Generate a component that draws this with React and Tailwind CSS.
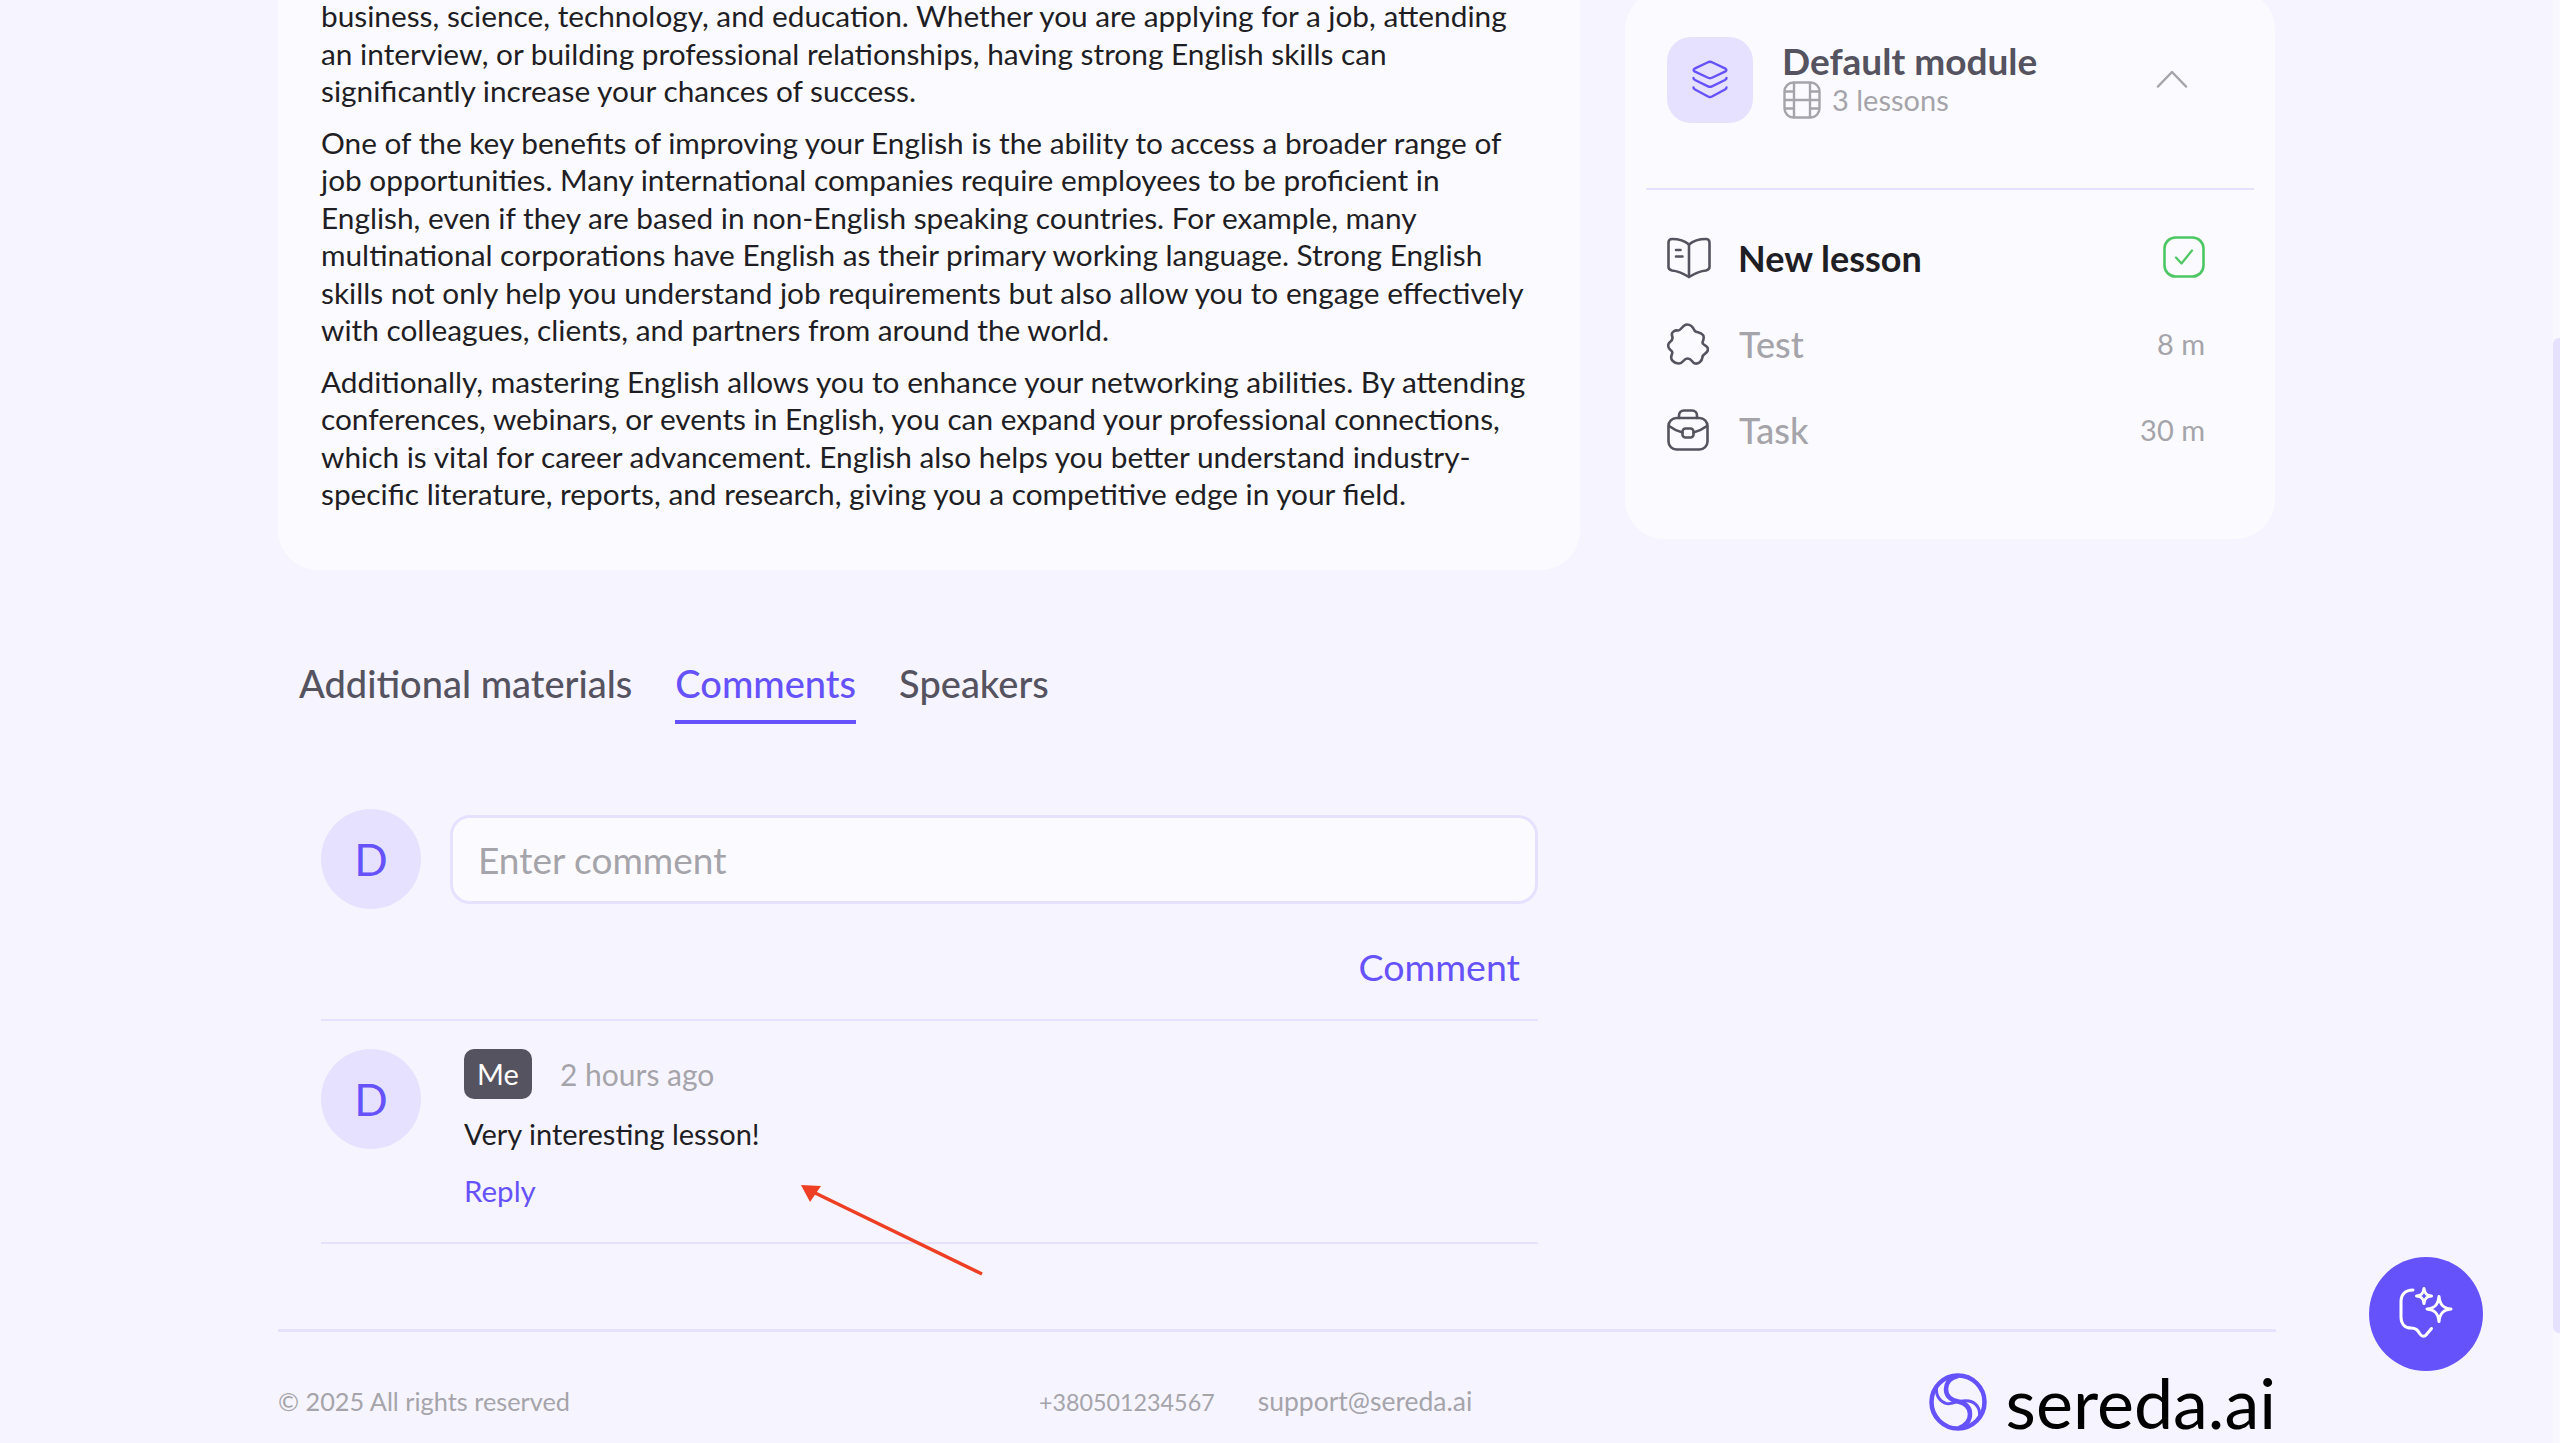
const paragraphs = [
  ['business, science, technology, and education. Whether you are applying for a job, attending', 'an interview, or building professional relationships, having strong English skills can', 'significantly increase your chances of success.'],
  ['One of the key benefits of improving your English is the ability to access a broader range of', 'job opportunities. Many international companies require employees to be proficient in', 'English, even if they are based in non-English speaking countries. For example, many', 'multinational corporations have English as their primary working language. Strong English', 'skills not only help you understand job requirements but also allow you to engage effectively', 'with colleagues, clients, and partners from around the world.'],
  ['Additionally, mastering English allows you to enhance your networking abilities. By attending', 'conferences, webinars, or events in English, you can expand your professional connections,', 'which is vital for career advancement. English also helps you better understand industry-', 'specific literature, reports, and research, giving you a competitive edge in your field.'],
]

function LayersIcon() {
  return (
    <svg width="40" height="40" viewBox="0 0 40 40" fill="none" stroke="#6652fa" strokeWidth="2.4" strokeLinecap="round" strokeLinejoin="round">
      <path d="M17.5 2.5c1.5-.8 3.5-.8 5 0l13 6.2c1.2.7 1.2 2 0 2.700l-13 6.100c-1.500.8-3.500.8-5 0l-13-6.100c-1.200-.7-1.200-2 0-2.700z" />
      <path d="M3.500 18c0 1 .5 1.500 1.500 2l13 6.300c1.300.6 2.700.6 4 0L35 20c1-.5 1.500-1 1.500-2" />
      <path d="M3.500 27.500c0 1 .5 1.500 1.500 2l13 7c1.300.6 2.700.6 4 0l13-7c1-.5 1.500-1 1.500-2" />
    </svg>
  )
}

function FilmIcon() {
  return (
    <svg width="38" height="38" viewBox="0 0 38 38" fill="none" stroke="#a5a4aa" strokeWidth="2.400" strokeLinecap="round" strokeLinejoin="round">
      <rect x="1.500" y="1.500" width="35" height="35" rx="9" />
      <path d="M11 2v34M27 2v34M2 19h34M2 10.500h9M2 27.500h9M27 10.500h9M27 27.500h9" />
    </svg>
  )
}

function BookIcon() {
  return (
    <svg width="44" height="42" viewBox="0 0 44 42" fill="none" stroke="#55535f" strokeWidth="2.600" strokeLinecap="round" strokeLinejoin="round">
      <path d="M22 7.500 C18 4 11 2 5 2 C3 2 1.500 3.500 1.500 5.500 V30 C1.500 32 3 33 5 33.500 C11 34 17 37 22 40 C27 37 33 34 39 33.500 C41 33 42.500 32 42.500 30 V5.500 C42.500 3.500 41 2 39 2 C33 2 26 4 22 7.500 Z" />
      <path d="M22 7.500V40M9 13h4.500M9 19.500h6.500" />
    </svg>
  )
}

function PuzzleIcon() {
  return (
    <svg width="42" height="42" viewBox="0 0 42 42" fill="none" stroke="#55535f" strokeWidth="2.600" strokeLinecap="round" strokeLinejoin="round">
      <path d="M20 1.500C24 1.500 26 4 27.500 7.500C29 10 33 8.500 36 12C38 15 35.500 18 35.500 20C35.500 22 41 22.500 41 26C41 31 36 30 35.500 34C35 39 31 41 28 40.500C25 40 25 35.500 20.500 35.500C16 35.500 16.500 41 11.500 40.500C7 40 3 37 4.500 32.500C5.500 29.500 6 29 3.500 27C.5 24.500 .5 21 3 19C6 17 6 15 5 12.500C4 9 8 7 11 7.500C14 8 15.500 1.500 20 1.500Z" />
    </svg>
  )
}

function BriefcaseIcon() {
  return (
    <svg width="42" height="42" viewBox="0 0 42 42" fill="none" stroke="#55535f" strokeWidth="2.600" strokeLinecap="round" strokeLinejoin="round">
      <rect x="1.500" y="9" width="39" height="31.500" rx="8" />
      <path d="M12 9V6.500C12 3.500 14 1.500 17 1.500h8c3 0 5 2 5 5V9" />
      <path d="M2 17c4 3 8 5 13.500 6.500M40 17c-4 3-8 5-13.500 6.500" />
      <rect x="15.500" y="19.500" width="11" height="9" rx="3" />
    </svg>
  )
}

function CheckBox() {
  return (
    <svg className="-mt-[2px]" width="42" height="42" viewBox="0 0 42 42" fill="none" stroke="#4dc764" strokeWidth="2.600" strokeLinecap="round" strokeLinejoin="round">
      <rect x="1.500" y="1.500" width="39" height="39" rx="11" />
      <path d="M13 21.500l5.500 6 10.500-13" strokeWidth="2.200" />
    </svg>
  )
}

function ChatSparkle() {
  return (
    <svg width="54" height="54" viewBox="0 0 54 54" fill="none" stroke="#ffffff" strokeWidth="3" strokeLinecap="round" strokeLinejoin="round">
      <path d="M14 3C6 3 2 8 2 14v16c0 7 4 11 10 11 5 0 6.500 2 9 6 2 3 4.500 3 6.500 .5l5-6" />
      <path d="M25 1.500c.6 5 2.500 7 7.500 7.500-5 .5-6.900 2.500-7.500 7.500-.6-5-2.500-7-7.500-7.500 5-.5 6.900-2.500 7.500-7.500z" />
      <path d="M40 9.500c.8 8 4 11.700 12 12.500-8 .8-11.200 4.500-12 12.500-.8-8-4-11.700-12-12.500 8-.8 11.200-4.500 12-12.500z" />
    </svg>
  )
}

function Logo() {
  return (
    <svg width="58" height="58" viewBox="0 0 58 58" fill="none" stroke="#6652fa" strokeWidth="4.500">
      <circle cx="29" cy="29" r="26.500" />
      <path d="M29 3 C20 5 17 11 17 16 C17 23 22 27 29 28.500 C36 30 41 34 41 41 C41 47 38 52 30 55" />
      <path d="M8 12 C6 20 9 27 16 30 C20 32 25 30 29 28.500" strokeWidth="3" />
      <path d="M50 46 C52 38 49 31 42 28.500 C38 27 33 28 29 28.500" strokeWidth="3" />
    </svg>
  )
}

function Avatar() {
  return (
    <div className="w-[100px] h-[100px] shrink-0 rounded-full bg-[#e5e1ff] flex items-center justify-center text-[44px] leading-none text-[#6652fa]">D</div>
  )
}

function ArrowMark() {
  return (
    <svg className="absolute left-[795px] top-[1180px]" width="195" height="100" viewBox="0 0 195 100" fill="none">
      <path d="M187 94 L14 10" stroke="#ee3f24" strokeWidth="3.500" />
      <path d="M6 5 L26 6 L15 22 Z" fill="#ee3f24" />
    </svg>
  )
}

export default function App() {
  return (
    <div className="relative h-[1443px] overflow-hidden bg-[#f6f5ff] font-['Lato',sans-serif] text-[#1f1e24]">
      <div className="flex gap-[45px] pl-[278px]">
        <div className="w-[1302px] shrink-0">
          <div className="-mt-[40px] h-[610px] rounded-[40px] bg-[#fbfbff] pl-[43px] pt-[37px] text-[29.800px] leading-[37.500px] flex flex-col gap-[14px]">
            {paragraphs.map((lines, i) => (
              <p key={i}>
                {lines.map((line) => (
                  <span key={line} className="block whitespace-nowrap">{line}</span>
                ))}
              </p>
            ))}
          </div>

          <div className="mt-[89px] flex gap-[43px] pl-[21px] text-[38px] leading-[48px] font-medium text-[#55535f]">
            <div className="h-[65px]">Additional materials</div>
            <div className="h-[65px] border-b-4 border-[#6652fa] text-[#6652fa]">Comments</div>
            <div className="h-[65px]">Speakers</div>
          </div>

          <div className="mt-[85px] pl-[43px] pr-[42px]">
            <div className="flex gap-[29px]">
              <Avatar />
              <div className="mt-[6px] h-[89px] flex-1 rounded-[20px] border-[3px] border-[#e5e1ff] bg-[#fbfbff] pl-[25px] flex items-center text-[37px] text-[#a5a4aa]">Enter comment</div>
            </div>
            <div className="mt-[36px] flex justify-end pr-[18px] text-[37.500px] leading-[44px] text-[#6652fa]">Comment</div>
            <div className="mt-[30px] h-[2px] bg-[#e5e1ff]" />

            <div className="flex gap-[43px] pt-[28px] h-[223px] border-b-2 border-[#e5e1ff]">
              <Avatar />
              <div>
                <div className="flex items-center gap-[28px]">
                  <span className="h-[50px] w-[68px] rounded-[10px] bg-[#55535f] text-white text-[29px] flex items-center justify-center">Me</span>
                  <span className="text-[30px] text-[#a5a4aa]">2 hours ago</span>
                </div>
                <div className="mt-[17px] text-[29px] leading-[36px]">Very interesting lesson!</div>
                <div className="mt-[21px] text-[29.500px] leading-[36px] text-[#6652fa]">Reply</div>
              </div>
            </div>
          </div>
        </div>

        <div className="-mt-[10px] w-[650px] h-[549px] shrink-0 rounded-[40px] bg-[#fbfbff] pt-[47px]">
          <div className="flex items-center pl-[42px] pr-[87px] h-[86px]">
            <div className="w-[86px] h-[86px] rounded-[24px] bg-[#e5e1ff] flex items-center justify-center"><LayersIcon /></div>
            <div className="ml-[29px] flex-1">
              <div className="text-[37px] leading-[40px] font-bold text-[#55535f]">Default module</div>
              <div className="pl-[1px] flex items-center gap-[11px] text-[29px] leading-[38px] text-[#a5a4aa]"><FilmIcon />3 lessons</div>
            </div>
            <svg className="-mt-[2px]" width="32" height="18" viewBox="0 0 32 18" fill="none" stroke="#a5a4aa" strokeWidth="2.500" strokeLinecap="round" strokeLinejoin="round"><path d="M2 16.500 16 2l14 14.500" /></svg>
          </div>
          <div className="mt-[65px] mx-[21px] h-[2px] bg-[#e5e1ff]" />
          <div className="mt-[47px] pl-[42px] pr-[70px] flex flex-col gap-[44px]">
            <div className="flex items-center h-[42px]"><BookIcon /><span className="ml-[27px] flex-1 text-[36px] font-bold text-[#1f1e24]">New lesson</span><CheckBox /></div>
            <div className="flex items-center h-[42px]"><PuzzleIcon /><span className="ml-[30px] flex-1 text-[36px] font-medium text-[#a5a4aa]">Test</span><span className="text-[29px] text-[#a5a4aa]">8 m</span></div>
            <div className="flex items-center h-[42px]"><BriefcaseIcon /><span className="ml-[30px] flex-1 text-[36px] font-medium text-[#a5a4aa]">Task</span><span className="text-[29px] text-[#a5a4aa]">30 m</span></div>
          </div>
        </div>
      </div>

      <div className="ml-[278px] mr-[284px] mt-[85px] border-t-[3px] border-[#e5e1ff]">
        <div className="flex items-center mt-[40px] h-[60px] text-[#a5a4aa]">
          <span className="w-[761px] text-[25.300px]">© 2025 All rights reserved</span>
          <span className="text-[23.300px]">+380501234567</span>
          <span className="ml-[43px] text-[26.500px]">support@sereda.ai</span>
          <div className="ml-auto flex items-center gap-[19px]">
            <Logo />
            <span className="text-[70px] leading-none text-[#000000]">sereda.ai</span>
          </div>
        </div>
      </div>

      <ArrowMark />

      <div className="absolute left-[2369px] top-[1257px] w-[114px] h-[114px] rounded-full bg-[#6652fa] flex items-center justify-center"><ChatSparkle /></div>

      <div className="absolute right-0 top-0 bottom-0 w-[7px] bg-[#f9f8ff]">
        <div className="absolute left-0 right-0 top-[338px] h-[995px] rounded-l-[6px] bg-[#e5e1ff]" />
      </div>
    </div>
  )
}
